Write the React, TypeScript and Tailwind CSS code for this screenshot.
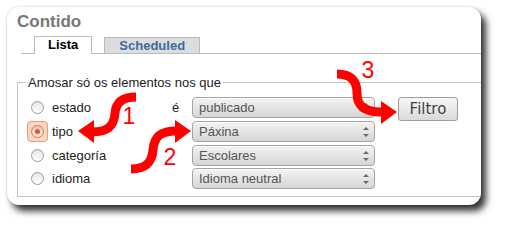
import React from 'react';

const rows = [
  { name: 'estado', value: 'publicado', checked: false, op: 'é' },
  { name: 'tipo', value: 'Páxina', checked: true, op: '' },
  { name: 'categoría', value: 'Escolares', checked: false, op: '' },
  { name: 'idioma', value: 'Idioma neutral', checked: false, op: '' },
];

const Radio: React.FC<{ checked: boolean }> = ({ checked }) => {
  if (checked) {
    return (
      <div className="-m-[4px] p-[3px] rounded-[4px] border border-[#ef9a78] bg-[#fbd6c3]">
        <div className="w-[13px] h-[13px] rounded-full border border-[#c5805f] bg-gradient-to-b from-[#f3c2ab] to-[#fde9de] flex items-center justify-center">
          <div className="w-[5px] h-[5px] rounded-full bg-[#dd5a33]" />
        </div>
      </div>
    );
  }
  return <div className="w-[13px] h-[13px] rounded-full border border-[#9a9a9a] bg-gradient-to-b from-[#e6e6e6] to-white" />;
};

const SelectArrows = () => (
  <svg width="8" height="14" viewBox="0 0 8 14" className="shrink-0">
    <path d="M1 5 L4 2 L7 5 Z" fill="#6b6b6b" />
    <path d="M1 9 L4 12 L7 9 Z" fill="#6b6b6b" />
  </svg>
);

const Arrows = () => (
  <svg className="absolute inset-0 pointer-events-none" width="505" height="230" viewBox="0 0 505 230">
    <g fill="none" stroke="#ff0000" strokeWidth="9" strokeLinecap="butt">
      <path d="M136,97 C122,97 116,103 115,113 C114,126 108,132 92,132" />
      <path d="M131,169 C146,169 152,162 153,150 C154,137 160,131 176,131" />
      <path d="M337,74 C351,74 357,81 357,93 C357,106 364,112 381,112" />
    </g>
    <g fill="#ff0000">
      <polygon points="78,131 94,120 94,143" />
      <polygon points="191,131 175,120 175,143" />
      <polygon points="397,112 381,101 381,124" />
    </g>
    <g fill="#ff0000" fontFamily="'Liberation Sans', Arial, sans-serif" fontSize="23" textAnchor="middle">
      <text x="129" y="124">1</text>
      <text x="170" y="165">2</text>
      <text x="368" y="78">3</text>
    </g>
  </svg>
);

export default function App() {
  return (
    <div className="relative w-[505px] h-[230px] bg-white overflow-hidden font-['Liberation_Sans',Arial,sans-serif]">
      <div className="ml-[7px] mt-[7px] w-[474px] h-[198px] rounded-[12px] bg-white overflow-hidden pl-[10px] shadow-[0_0_2px_rgba(0,0,0,0.25),5px_6px_7px_rgba(0,0,0,0.8)]">
        <div className="pt-[5px] h-[25px] leading-[20px] text-[17px] font-bold text-[#777777]">Contido</div>

        {/* tabs */}
        <div className="mt-[4px] ml-[4px] pl-[13px] flex items-end gap-[12px] border-b border-[#bbbbbb]">
          <div className="h-[18px] -mb-px px-[13px] border border-b-0 border-[#bbbbbb] bg-white text-[13px] leading-[16px] font-bold text-black">
            Lista
          </div>
          <div className="h-[16px] px-[14px] border border-b-0 border-[#bbbbbb] bg-[#dddddd] text-[13px] leading-[15px] font-bold text-[#3a6aa0]">
            Scheduled
          </div>
        </div>

        {/* filter */}
        <fieldset className="mt-[21px] border border-r-0 border-[#c4c4c4] pt-[7px] pb-[5px] px-0">
          <legend className="ml-[8px] px-[2px] text-[13px] leading-[15px] text-[#222222]">
            Amosar só os elementos nos que
          </legend>
          <div className="flex flex-col pl-[13px]">
            {rows.map((r, i) => (
              <div key={r.name} className={`flex items-start ${i < 2 ? 'h-[24px]' : 'h-[23px]'}`}>
                <div className="h-[21px] flex items-center">
                  <Radio checked={r.checked} />
                  <span className="ml-[8px] w-[120px] text-[13px] text-[#222222]">{r.name}</span>
                  <span className="w-[20px] text-[13px] text-[#222222]">{r.op}</span>
                </div>
                <div className="w-[183px] h-[21px] rounded-[4px] border border-[#a4a4a4] bg-gradient-to-b from-[#f4f4f4] to-[#d6d6d6] shadow-[inset_0_1px_0_rgba(255,255,255,0.8)] flex items-center pl-[6px] pr-[4px]">
                  <span className="flex-1 text-[13px] text-[#555555]">{r.value}</span>
                  <SelectArrows />
                </div>
                {i === 0 && (
                  <button className="ml-[23px] w-[60px] h-[24px] rounded-[3px] border border-[#9c9c9c] bg-gradient-to-b from-[#f7f7f7] to-[#dadada] font-['DejaVu_Sans',sans-serif] text-[15px] text-[#444444] flex items-center justify-center">
                    Filtro
                  </button>
                )}
              </div>
            ))}
          </div>
        </fieldset>
      </div>
      <Arrows />
    </div>
  );
}
